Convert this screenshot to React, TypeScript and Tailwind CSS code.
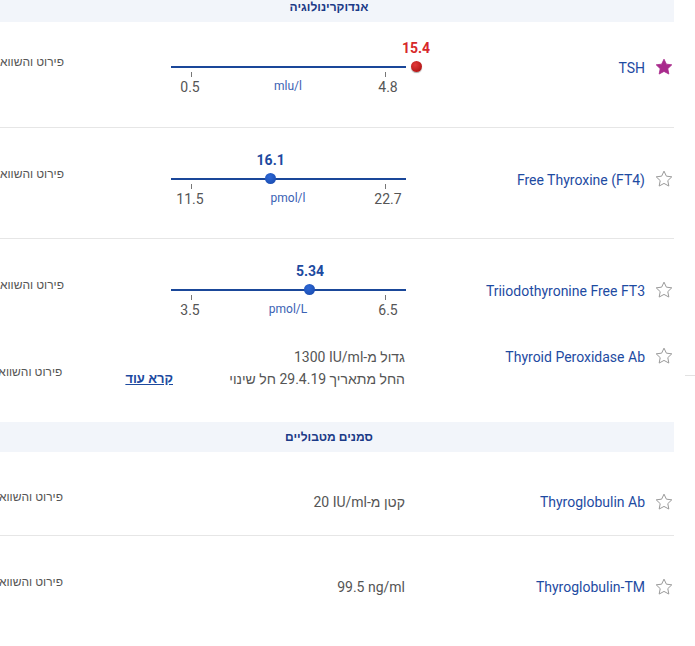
import React from "react";

type GaugeProps = {
  low: number;
  high: number;
  value: number;
  unit: string;
  alert?: boolean;
};

const Star = ({ filled }: { filled?: boolean }) => (
  <svg width="20" height="20" viewBox="0 0 24 24" className="shrink-0">
    <path
      d="M12 2.6l2.85 6 6.5.8-4.8 4.55 1.25 6.5L12 17.3l-5.8 3.15 1.25-6.5-4.8-4.55 6.5-.8z"
      fill={filled ? "#a82a8c" : "none"}
      stroke={filled ? "#a82a8c" : "#9a9a9a"}
      strokeWidth={filled ? 1 : 1.2}
      strokeLinejoin="round"
    />
  </svg>
);

const Gauge = ({ low, high, value, unit, alert }: GaugeProps) => {
  // ticks sit at 20px and 214px inside the 235px bar
  const dotX = value > high ? 245 : 20 + ((value - low) / (high - low)) * 194;

  return (
    <div dir="ltr" className="relative w-[235px] h-[60px] shrink-0">
      <div
        className={
          "absolute top-[2px] -translate-x-1/2 text-[14px] leading-[18px] font-bold " +
          (alert ? "text-[#d7282a]" : "text-[#1d4a9f]")
        }
        style={{ left: dotX }}
      >
        {value}
      </div>
      <div className="absolute left-0 right-0 top-[29px] h-[2px] bg-[#1a4799]" />
      <div className="absolute left-[20px] top-[35px] w-px h-[5px] bg-[#777]" />
      <div className="absolute left-[214px] top-[35px] w-px h-[5px] bg-[#777]" />
      <div
        className={
          "absolute top-[24px] w-[11px] h-[11px] rounded-full " +
          (alert
            ? "bg-[radial-gradient(circle_at_38%_35%,#e23a3a,#a30a0a)] shadow-[0_1px_1px_rgba(0,0,0,0.35)]"
            : "bg-[radial-gradient(circle_at_40%_35%,#2e68d6,#1546a8)]")
        }
        style={{ left: dotX - 5.5 }}
      />
      <div className="absolute left-[19px] top-[41px] -translate-x-1/2 text-[14px] leading-[18px] text-[#555]">
        {low}
      </div>
      <div className="absolute left-[217px] top-[41px] -translate-x-1/2 text-[14px] leading-[18px] text-[#555]">
        {high}
      </div>
      <div className="absolute left-[117px] top-[40px] -translate-x-1/2 text-[12px] leading-[18px] text-[#3b62b4]">
        {unit}
      </div>
    </div>
  );
};

const SectionHeader = ({ title, className }: { title: string; className?: string }) => (
  <div
    className={
      "h-[30px] flex items-center justify-center bg-[#f2f5fa] text-[12px] font-bold text-[#1b3a87] " +
      (className ?? "")
    }
  >
    {title}
  </div>
);

const Name = ({ name, filled }: { name: string; filled?: boolean }) => (
  <>
    <Star filled={filled} />
    <div className="w-[225px] mr-[9px] shrink-0 text-[14px] leading-[20px] text-[#1e4ba2] mt-[2px]">
      <span dir="ltr">{name}</span>
    </div>
  </>
);

const Compare = ({ className }: { className?: string }) => (
  <div className={"text-[12px] leading-[20px] text-[#555] whitespace-nowrap " + (className ?? "")}>
    פירוט והשוואה
  </div>
);

const gaugeRows = [
  { name: "TSH", filled: true, low: 0.5, high: 4.8, value: 15.4, unit: "mlu/l", alert: true, cls: "pt-[15px] pb-[30px] border-b" },
  { name: "Free Thyroxine (FT4)", low: 11.5, high: 22.7, value: 16.1, unit: "pmol/l", cls: "pt-[21px] pb-[29px] border-b" },
  { name: "Triiodothyronine Free FT3", low: 3.5, high: 6.5, value: 5.34, unit: "pmol/L", cls: "pt-[21px]" },
];

export default function App() {
  return (
    <div className="w-[695px] h-[646px] overflow-hidden bg-white flex font-['Roboto','Liberation_Sans','Noto_Sans',sans-serif]">
      <div dir="rtl" className="w-[690px] -ml-[16px] shrink-0">
        <SectionHeader title="אנדוקרינולוגיה" className="-mt-[8px]" />

        {gaugeRows.map((r) => (
          <div key={r.name} className={"flex items-center border-[#e6e6e6] " + r.cls}>
            <Name name={r.name} filled={r.filled} />
            <div className="mr-[14px]">
              <Gauge low={r.low} high={r.high} value={r.value} unit={r.unit} alert={r.alert} />
            </div>
            <div className="flex-1 pr-[107px] mb-[10px]">
              <Compare />
            </div>
          </div>
        ))}

        <div className="flex items-start h-[102px] pt-[26px]">
          <Star />
          <div className="w-[225px] mr-[9px] shrink-0 text-[14px] leading-[22px] text-[#1e4ba2]">
            <span dir="ltr">Thyroid Peroxidase Ab</span>
          </div>
          <div className="w-[232px] mr-[15px] shrink-0 text-[14px] leading-[22px] text-[#555]">
            <div>
              גדול מ-<span dir="ltr">1300 IU/ml</span>
            </div>
            <div>החל מתאריך 29.4.19 חל שינוי</div>
          </div>
          <a className="mt-[23px] text-[13px] leading-[20px] font-bold text-[#1d4a9f] underline whitespace-nowrap">
            קרא עוד
          </a>
          <div className="flex-1 pr-[63px] mt-[16px]">
            <Compare />
          </div>
        </div>

        <SectionHeader title="סמנים מטבוליים" />

        <div className="flex items-start h-[84px] pt-[40px] border-b border-[#e6e6e6]">
          <Star />
          <div className="w-[225px] mr-[9px] shrink-0 text-[14px] leading-[20px] text-[#1e4ba2]">
            <span dir="ltr">Thyroglobulin Ab</span>
          </div>
          <div className="w-[235px] mr-[15px] shrink-0 text-[14px] leading-[20px] text-[#555]">
            קטן מ-<span dir="ltr">20 IU/ml</span>
          </div>
          <div className="flex-1 pr-[107px] -mt-[5px]">
            <Compare />
          </div>
        </div>

        <div className="flex items-start pt-[41px]">
          <Star />
          <div className="w-[225px] mr-[9px] shrink-0 text-[14px] leading-[20px] text-[#1e4ba2]">
            <span dir="ltr">Thyroglobulin-TM</span>
          </div>
          <div className="w-[235px] mr-[15px] shrink-0 text-[14px] leading-[20px] text-[#555]">
            <span dir="ltr">99.5 ng/ml</span>
          </div>
          <div className="flex-1 pr-[107px] -mt-[5px]">
            <Compare />
          </div>
        </div>
      </div>

      <div className="flex-1 pt-[375px] pl-[11px]">
        <div className="h-px bg-[#e2e2e2]" />
      </div>
    </div>
  );
}
